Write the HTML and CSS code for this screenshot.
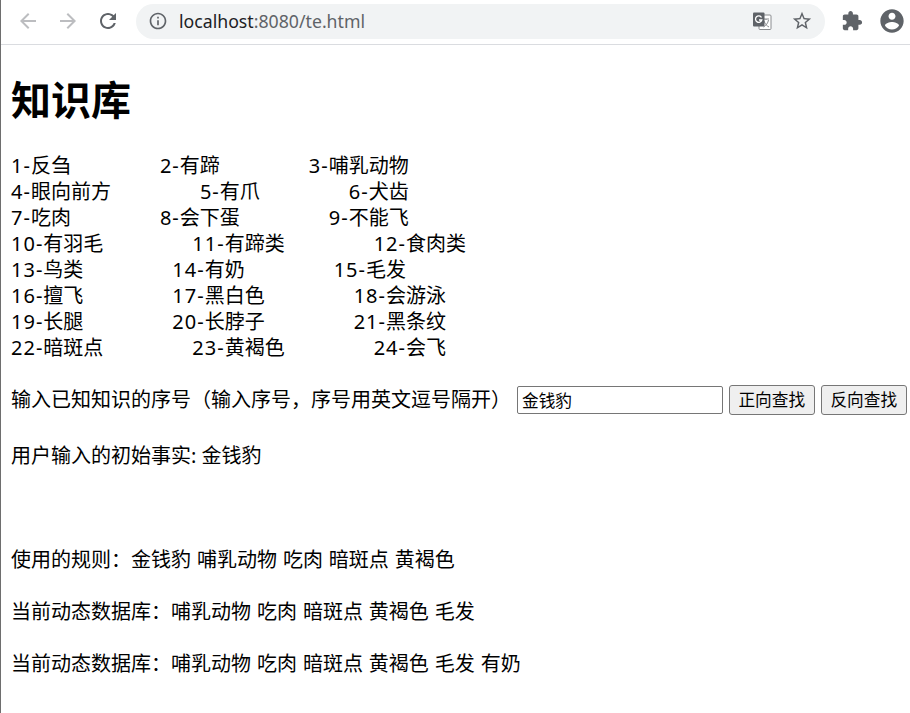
FILE: index.html
```html
<!DOCTYPE html>
<html lang="zh">
<head>
<meta charset="utf-8">
<title>知识库</title>
<link rel="stylesheet" href="styles.css">
</head>
<body>
<div class="window">
  <header class="toolbar">
    <svg class="icon nav dim" viewBox="0 0 24 24"><path d="M20 11H7.83l5.59-5.59L12 4l-8 8 8 8 1.41-1.41L7.83 13H20v-2z"/></svg>
    <svg class="icon nav dim" viewBox="0 0 24 24"><path d="M4 11h12.17l-5.59-5.59L12 4l8 8-8 8-1.41-1.41L16.17 13H4v-2z"/></svg>
    <svg class="icon nav" viewBox="0 0 24 24"><path d="M17.65 6.35C16.2 4.9 14.21 4 12 4c-4.42 0-7.99 3.58-7.99 8s3.57 8 7.99 8c3.73 0 6.84-2.55 7.73-6h-2.08c-.82 2.33-3.04 4-5.65 4-3.31 0-6-2.69-6-6s2.69-6 6-6c1.66 0 3.14.69 4.22 1.78L13 11h7V4l-2.35 2.35z"/></svg>
    <div class="omnibox">
      <svg class="icon info" viewBox="0 0 24 24"><path d="M11 7h2v2h-2zm0 4h2v6h-2zm1-9C6.48 2 2 6.48 2 12s4.48 10 10 10 10-4.48 10-10S17.52 2 12 2zm0 18c-4.41 0-8-3.59-8-8s3.59-8 8-8 8 3.59 8 8-3.59 8-8 8z"/></svg>
      <span class="url"><span class="host">localhost</span>:8080/te.html</span>
      <svg class="translate" viewBox="0 0 20 20">
        <rect x="7" y="4" width="12" height="14.5" rx="1" fill="#fff" stroke="#8a8c8f" stroke-width="1"/>
        <path d="M11 8h6M14 8v1M12 10c1 3 3 5 5 6M16.500 9c-.5 3-2.500 5.500-5 7" fill="none" stroke="#8a8c8f" stroke-width="1"/>
        <rect x="1" y="1.500" width="11.500" height="14" rx="1" fill="#5f6368"/>
        <path d="M9.500 6.500A3.200 3.200 0 1 0 9.800 9H7" fill="none" stroke="#fff" stroke-width="1.300"/>
      </svg>
      <svg class="icon star" viewBox="0 0 24 24"><path d="M22 9.240l-7.190-.62L12 2 9.190 8.630 2 9.240l5.460 4.730L5.820 21 12 17.270 18.180 21l-1.630-7.030L22 9.240zM12 15.400l-3.760 2.270 1-4.280-3.320-2.880 4.380-.38L12 6.100l1.710 4.040 4.380.38-3.320 2.880 1 4.280L12 15.400z"/></svg>
    </div>
    <svg class="icon ext" viewBox="0 0 24 24"><path d="M20.500 11H19V7c0-1.100-.9-2-2-2h-4V3.500C13 2.120 11.880 1 10.500 1S8 2.120 8 3.500V5H4c-1.100 0-1.990.9-1.990 2v3.800H3.500c1.490 0 2.700 1.210 2.700 2.700s-1.210 2.700-2.700 2.700H2V20c0 1.100.9 2 2 2h3.800v-1.500c0-1.490 1.210-2.700 2.700-2.700 1.490 0 2.700 1.210 2.700 2.700V22H17c1.100 0 2-.9 2-2v-4h1.500c1.380 0 2.500-1.120 2.500-2.500S21.880 11 20.500 11z"/></svg>
    <svg class="icon avatar" viewBox="0 0 24 24"><path d="M12 2C6.480 2 2 6.480 2 12s4.480 10 10 10 10-4.480 10-10S17.520 2 12 2zm0 3c1.660 0 3 1.340 3 3s-1.340 3-3 3-3-1.340-3-3 1.340-3 3-3zm0 14.200c-2.500 0-4.710-1.280-6-3.220.03-1.990 4-3.080 6-3.080 1.990 0 5.970 1.090 6 3.080-1.290 1.940-3.500 3.220-6 3.220z"/></svg>
  </header>
  <main class="page">
    <h1 class="title">知识库</h1>
    <div class="facts">
      <div><span class="fact"><span class="num">1-</span>反刍</span><span class="fact"><span class="num">2-</span>有蹄</span><span class="fact"><span class="num">3-</span>哺乳动物</span></div>
      <div><span class="fact"><span class="num">4-</span>眼向前方</span><span class="fact"><span class="num">5-</span>有爪</span><span class="fact"><span class="num">6-</span>犬齿</span></div>
      <div><span class="fact"><span class="num">7-</span>吃肉</span><span class="fact"><span class="num">8-</span>会下蛋</span><span class="fact"><span class="num">9-</span>不能飞</span></div>
      <div><span class="fact"><span class="num">10-</span>有羽毛</span><span class="fact"><span class="num">11-</span>有蹄类</span><span class="fact"><span class="num">12-</span>食肉类</span></div>
      <div><span class="fact"><span class="num">13-</span>鸟类</span><span class="fact"><span class="num">14-</span>有奶</span><span class="fact"><span class="num">15-</span>毛发</span></div>
      <div><span class="fact"><span class="num">16-</span>擅飞</span><span class="fact"><span class="num">17-</span>黑白色</span><span class="fact"><span class="num">18-</span>会游泳</span></div>
      <div><span class="fact"><span class="num">19-</span>长腿</span><span class="fact"><span class="num">20-</span>长脖子</span><span class="fact"><span class="num">21-</span>黑条纹</span></div>
      <div><span class="fact"><span class="num">22-</span>暗斑点</span><span class="fact"><span class="num">23-</span>黄褐色</span><span class="fact"><span class="num">24-</span>会飞</span></div>
    </div>
    <form class="query">
      <label class="query-label" for="known">输入已知知识的序号（输入序号，序号用英文逗号隔开）</label>
      <input class="query-input" id="known" type="text" value="金钱豹">
      <button class="query-btn" type="button">正向查找</button>
      <button class="query-btn" type="button">反向查找</button>
    </form>
    <p class="line line-gap">用户输入的初始事实: 金钱豹</p>
    <p class="line spaced">使用的规则：金钱豹 哺乳动物 吃肉 暗斑点 黄褐色</p>
    <p class="line spaced">当前动态数据库：哺乳动物 吃肉 暗斑点 黄褐色 毛发</p>
    <p class="line spaced">当前动态数据库：哺乳动物 吃肉 暗斑点 黄褐色 毛发 有奶</p>
  </main>
</div>
</body>
</html>
```

FILE: styles.css
```css
html, body {
  margin: 0;
  padding: 0;
  background: #fff;
}
body {
  font-family: "Noto Sans", "Noto Sans CJK SC", sans-serif;
  color: #000;
  overflow: hidden;
}
.window {
  width: 910px;
  height: 713px;
  box-sizing: border-box;
  border-left: 1px solid #6e6e6e;
  overflow: hidden;
}
.toolbar {
  height: 44px;
  box-sizing: content-box;
  border-bottom: 1px solid #dadce0;
  display: flex;
  align-items: center;
}
.icon {
  fill: #5f6368;
  flex: none;
}
.nav {
  width: 24px;
  height: 24px;
  margin-left: 16px;
  margin-bottom: 2px;
}
.nav:first-child {
  margin-left: 15px;
}
.dim {
  fill: #bcbdc0;
}
.omnibox {
  margin-left: 16px;
  margin-bottom: 2px;
  width: 689px;
  height: 35px;
  border-radius: 18px;
  background: #f1f3f4;
  display: flex;
  align-items: center;
  flex: none;
}
.info {
  width: 20px;
  height: 20px;
  margin-left: 12px;
}
.url {
  margin-left: 11px;
  font-size: 17.7px;
  color: #5f6368;
  flex: 1;
  white-space: nowrap;
}
.host {
  color: #202124;
}
.translate {
  width: 20px;
  height: 20px;
  flex: none;
}
.star {
  width: 22px;
  height: 22px;
  margin-left: 19px;
  margin-right: 12px;
}
.ext {
  width: 22px;
  height: 22px;
  margin-left: 16px;
  margin-bottom: 2px;
}
.avatar {
  width: 28px;
  height: 28px;
  margin-left: 15px;
  margin-bottom: 2px;
}
.page {
  padding-left: 10px;
  font-size: 20px;
  line-height: 26px;
}
.title {
  margin: 29px 0 27px;
  font-size: 40px;
  line-height: 52px;
  font-weight: 700;
}
.facts {
  margin-bottom: 24px;
}
.fact {
  margin-right: 89px;
}
.num {
  letter-spacing: 1px;
}
.query {
  display: flex;
  align-items: center;
  height: 30px;
  margin: 0 0 28px;
  white-space: nowrap;
}
.query-input {
  width: 206px;
  height: 28px;
  box-sizing: border-box;
  margin-left: 6px;
  padding: 1px 4px;
  border: 1px solid #767676;
  border-radius: 2px;
  font: inherit;
  font-size: 16.67px;
  line-height: 24px;
  color: #000;
  background: #fff;
}
.query-btn {
  height: 30px;
  width: 86.5px;
  box-sizing: border-box;
  margin-left: 5.5px;
  padding: 0;
  border: 1px solid #767676;
  border-radius: 3px;
  background: #efefef;
  font: inherit;
  font-size: 16.67px;
  line-height: 24px;
  color: #000;
}
.line {
  margin: 0 0 26px;
}
.line-gap {
  margin-bottom: 78px;
}
.spaced {
  word-spacing: 0.75px;
}
```
